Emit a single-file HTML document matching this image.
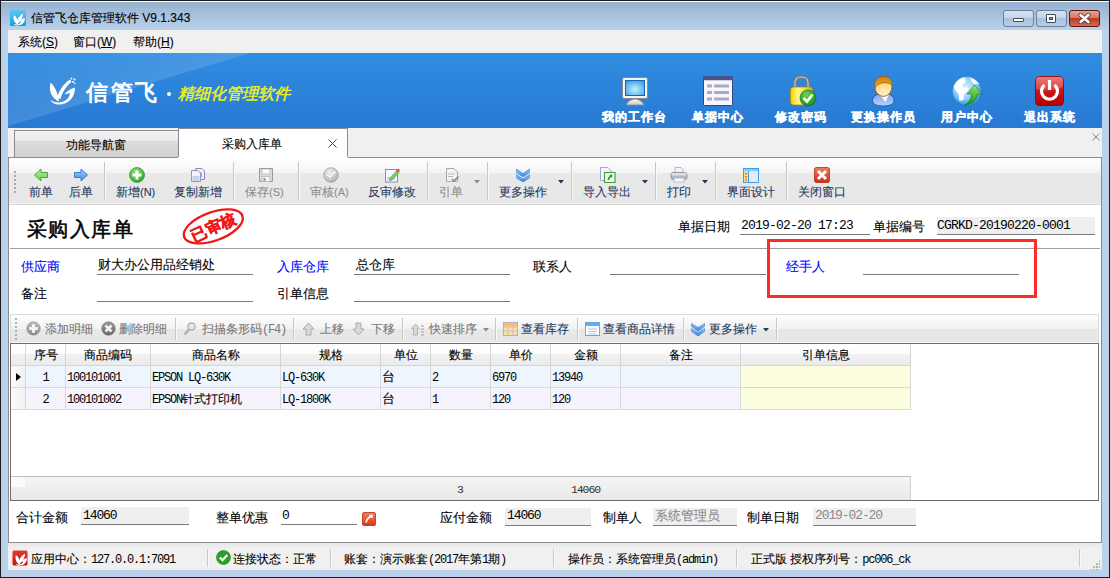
<!DOCTYPE html>
<html><head><meta charset="utf-8">
<style>
*{margin:0;padding:0;box-sizing:border-box}
html,body{-webkit-font-smoothing:antialiased;width:1110px;height:578px;overflow:hidden;position:relative;background:#b9d1ea;font-family:"Liberation Sans",sans-serif;font-size:12px;line-height:12px;color:#000}
.a{position:absolute}
.t{position:absolute;white-space:nowrap;font-size:12px;line-height:12px;-webkit-text-stroke:0.1px currentColor}
.m{font-family:"Liberation Mono",monospace}
.f13{font-size:13px;line-height:13px}
.fm{font-family:"Liberation Mono",monospace;font-size:13px;letter-spacing:-0.8px;-webkit-text-stroke:0}
.fm2{font-family:"Liberation Mono",monospace;font-size:13px;letter-spacing:-1.1px;-webkit-text-stroke:0}
.d{font-family:"Liberation Mono",monospace;font-size:12px;letter-spacing:-1.2px;-webkit-text-stroke:0}
.blue{color:#0000ff}
.ul{position:absolute;height:1px;background:#7a7a7a}
.sep{position:absolute;width:2px;background:#c8c8c8;border-right:1px solid #fafafa}
.tb{color:#1e395b}
.gr{color:#8d8d8d}
.hdr{position:absolute;top:344px;height:22px;border-right:1px solid #d5d5d5;border-bottom:1px solid #d5d5d5;background:linear-gradient(#fefefe 0,#fcfcfc 45%,#f2f2f2 50%,#ebebeb 100%)}
.cell{position:absolute;height:22px;border-right:1px solid #d8d8d8;border-bottom:1px solid #d8d8d8}
</style></head><body>

<!-- window frame -->
<div class="a" style="left:0;top:0;width:1110px;height:1px;background:#1a1a1a"></div>
<div class="a" style="left:0;top:0;width:1px;height:578px;background:#1a1a1a"></div>
<div class="a" style="left:1109px;top:0;width:1px;height:578px;background:#1a1a1a"></div>
<div class="a" style="left:0;top:577px;width:1110px;height:1px;background:#1a1a1a"></div>
<div class="a" style="left:1px;top:1px;width:1108px;height:1px;background:#fff"></div>
<div class="a" style="left:1px;top:2px;width:1108px;height:28px;background:linear-gradient(#96b1d0,#bad2ea)"></div>

<!-- title -->
<svg class="a" style="left:10px;top:10px" width="16" height="16" viewBox="0 0 16 16"><defs><linearGradient id="tic" x1="0" y1="0" x2="0" y2="1"><stop offset="0" stop-color="#62c4f0"/><stop offset="1" stop-color="#10a0e4"/></linearGradient></defs>
<rect x="0" y="0" width="16" height="16" rx="1.5" fill="url(#tic)"/>
<path d="M3.8 5 C3 10 4.5 13.5 8 14.5 C8.2 10.5 7 7 3.8 5 Z" fill="#fff"/>
<path d="M6.5 12.5 C7.5 8.5 9.5 5.5 13 3.5 C13.2 7 11.5 10 8 13.5 Z" fill="#fff"/>
<path d="M15 8.3 C15 13 11.5 15.5 7 15.5 C5.5 15.5 4.5 15 4 14 C7 15 10.5 14 11.3 11.5 L9 11.8 C10.5 9.5 13 8.5 15 8.3 Z" fill="#fff"/>
</svg>
<div class="t" style="left:31px;top:12px;color:#000">信管飞仓库管理软件 V9.1.343</div>

<!-- window buttons -->
<div class="a" style="left:1003px;top:10px;width:31px;height:17px;border:1px solid #6d7f96;border-radius:3px;background:linear-gradient(#d5e3f2 0%,#c2d5ea 45%,#a9c0dc 50%,#b7cde6 100%)"></div>
<div class="a" style="left:1013px;top:18px;width:11px;height:4px;background:#fff;border:1px solid #404c5c;border-radius:1px"></div>
<div class="a" style="left:1036px;top:10px;width:31px;height:17px;border:1px solid #6d7f96;border-radius:3px;background:linear-gradient(#d5e3f2 0%,#c2d5ea 45%,#a9c0dc 50%,#b7cde6 100%)"></div>
<div class="a" style="left:1046px;top:14px;width:10px;height:9px;background:#fff;border:1px solid #404c5c;border-radius:1px"></div>
<div class="a" style="left:1049px;top:17px;width:4px;height:3px;background:#8aa2c0;border:1px solid #404c5c"></div>
<div class="a" style="left:1069px;top:10px;width:31px;height:17px;border:1px solid #5a1a1a;border-radius:3px;background:linear-gradient(#e8a392 0%,#d47a64 45%,#bf3b20 50%,#cf6a50 100%)"></div>
<svg class="a" style="left:1078px;top:13px" width="13" height="11" viewBox="0 0 13 11"><path d="M2.5 2 L6.5 5.5 L10.5 2 M2.5 9 L6.5 5.5 L10.5 9" stroke="#4a3a3a" stroke-width="4.2" fill="none" stroke-linecap="round"/><path d="M2.5 2 L6.5 5.5 L10.5 2 M2.5 9 L6.5 5.5 L10.5 9" stroke="#fff" stroke-width="2.6" fill="none" stroke-linecap="round"/></svg>

<!-- menu bar -->
<div class="a" style="left:8px;top:30px;width:1094px;height:23px;background:#f0f0f0"></div>
<div class="t" style="left:18px;top:36px">系统(<u>S</u>)</div>
<div class="t" style="left:73px;top:36px">窗口(<u>W</u>)</div>
<div class="t" style="left:133px;top:36px">帮助(<u>H</u>)</div>

<!-- banner -->
<div class="a" style="left:8px;top:53px;width:1094px;height:75px;background:#2c83d9;overflow:hidden">
  <div class="a" style="left:0;top:0;width:1094px;height:75px;background:linear-gradient(#308de1 0,#2c84da 45%,#2879d2 100%)"></div>
  <div class="a" style="left:0;top:0;width:260px;height:75px;background:linear-gradient(163deg,rgba(255,255,255,.02) 0%,rgba(255,255,255,.10) 40%,rgba(255,255,255,.24) 72%);clip-path:polygon(0 0,242px 0,0 73px)"></div>
</div>
<svg class="a" style="left:49px;top:77px" width="27" height="29" viewBox="0 0 27 29">
<path d="M1.5 5.5 C-0.5 14 2.5 21 10 24.5 C9 17 6.5 10 1.5 5.5 Z" fill="#fff"/>
<path d="M8 21 C10 13 15 6.5 21 2.5 L22.5 5 C17.5 9 13.5 14.5 11.5 22 Z" fill="#fff"/>
<path d="M26 10.5 C26 21 19 28 9 27.5 C4.5 27 2.5 25 1.5 23 C5 25.5 9.5 26 13 25 C18 23.5 20.5 20 21 16 L15.5 17.5 C18 14 22 11.5 26 10.5 Z" fill="#fff"/>
<circle cx="22.5" cy="1.5" r="1" fill="#fff"/><circle cx="25.5" cy="2.5" r="1" fill="#fff"/><circle cx="24" cy="5" r="1" fill="#fff"/><circle cx="26" cy="6.5" r=".8" fill="#fff"/>
</svg>
<div class="t" style="left:86px;top:82px;font-size:22px;line-height:22px;color:#fff;-webkit-text-stroke:0.8px #fff;letter-spacing:2.6px">信管飞</div>
<div class="a" style="left:167px;top:92px;width:4px;height:4px;background:#fff;border-radius:2px"></div>
<div class="t" style="left:178px;top:86px;font-size:16px;line-height:16px;color:#f0f21a;font-style:italic;-webkit-text-stroke:0.45px #f0f21a">精细化管理软件</div>

<!-- banner right icons -->

<!-- monitor -->
<svg class="a" style="left:619px;top:75px" width="32" height="32" viewBox="0 0 32 32">
<defs><radialGradient id="scr" cx="0.5" cy="0.6" r="0.7"><stop offset="0" stop-color="#c8f0ff"/><stop offset="1" stop-color="#3aa0e8"/></radialGradient>
<linearGradient id="stand" x1="0" y1="0" x2="0" y2="1"><stop offset="0" stop-color="#ffffff"/><stop offset="1" stop-color="#c8c8c8"/></linearGradient></defs>
<rect x="3.5" y="2.5" width="25" height="21" rx="1.5" fill="#f4f4f4" stroke="#8a8a8a"/>
<rect x="6" y="5" width="20" height="16" fill="#1a66b0"/>
<rect x="7" y="6" width="18" height="14" fill="url(#scr)"/>
<path d="M7 30 Q9 25 16 24 Q23 25 25 30 Z" fill="url(#stand)" stroke="#8a8a8a" stroke-width=".8"/>
</svg>
<!-- list -->
<svg class="a" style="left:702px;top:75px" width="32" height="32" viewBox="0 0 32 32">
<rect x="1.5" y="1.5" width="29" height="29" rx="1.5" fill="#fff" stroke="#3b4578"/>
<rect x="1" y="1" width="30" height="4.5" fill="#48548c"/>
<rect x="2" y="5.5" width="28" height="24.5" fill="#f8f8fc"/>
<rect x="5" y="9.5" width="5" height="3" fill="#a9aac8"/><rect x="12" y="9.5" width="15" height="3" fill="#a9aac8"/>
<rect x="5" y="16" width="5" height="3" fill="#a9aac8"/><rect x="12" y="16" width="15" height="3" fill="#a9aac8"/>
<rect x="5" y="22.5" width="5" height="3" fill="#a9aac8"/><rect x="12" y="22.5" width="15" height="3" fill="#a9aac8"/>
</svg>
<!-- lock -->
<svg class="a" style="left:787px;top:75px" width="32" height="32" viewBox="0 0 32 32">
<defs><linearGradient id="lk" x1="0" y1="0" x2="1" y2="0"><stop offset="0" stop-color="#f0d000"/><stop offset=".35" stop-color="#fff88a"/><stop offset="1" stop-color="#e0b800"/></linearGradient>
<radialGradient id="gc" cx=".4" cy=".3" r=".8"><stop offset="0" stop-color="#6ad35a"/><stop offset="1" stop-color="#0a8a1a"/></radialGradient></defs>
<path d="M8 13 V8 Q8 2 14.5 2 Q21 2 21 8 V13" fill="none" stroke="#7a7a7a" stroke-width="3.2"/>
<path d="M8 13 V8 Q8 2 14.5 2 Q21 2 21 8 V13" fill="none" stroke="#c8c8c8" stroke-width="1.2"/>
<rect x="3.5" y="12" width="22" height="18" rx="3" fill="url(#lk)" stroke="#b08a00" stroke-width=".8"/>
<circle cx="21" cy="23" r="8" fill="url(#gc)" stroke="#0a6a10" stroke-width=".6"/>
<path d="M16.5 23 L20 26.5 L25.5 19.5" fill="none" stroke="#fff" stroke-width="2.6"/>
</svg>
<!-- person -->
<svg class="a" style="left:867px;top:75px" width="32" height="32" viewBox="0 0 32 32">
<defs><linearGradient id="fc" x1="0" y1="0" x2="0" y2="1"><stop offset="0" stop-color="#ffd060"/><stop offset="1" stop-color="#fff0c8"/></linearGradient>
<linearGradient id="bd" x1="0" y1="0" x2="0" y2="1"><stop offset="0" stop-color="#7aaaf0"/><stop offset="1" stop-color="#b0d4fa"/></linearGradient>
<linearGradient id="hr" x1="0" y1="0" x2="0" y2="1"><stop offset="0" stop-color="#d08010"/><stop offset="1" stop-color="#f0a820"/></linearGradient></defs>
<path d="M5.5 25.5 Q6 19.5 13 19 L20 19 Q27 19.5 27 25.5 Q27 31 16.2 31 Q5.5 31 5.5 25.5 Z" fill="url(#bd)" stroke="#3050b0" stroke-width=".9"/>
<path d="M12.5 19.5 L18.5 27 L22 19.5 Z" fill="#fff"/>
<ellipse cx="16.4" cy="11.4" rx="8.6" ry="10" fill="url(#fc)" stroke="#a05800" stroke-width=".9"/>
<path d="M7.9 13 C7 5 10.5 1.4 16.4 1.4 C22.5 1.4 25.3 5 25 10.5 C22 7.5 17.5 7 13.5 8.5 C11 9.5 9 11 7.9 13 Z" fill="url(#hr)" stroke="#a05800" stroke-width=".7"/>
</svg>
<!-- globe -->
<svg class="a" style="left:951px;top:75px" width="32" height="32" viewBox="0 0 32 32">
<defs><radialGradient id="gl" cx=".45" cy=".4" r=".65"><stop offset="0" stop-color="#d8f2ff"/><stop offset=".6" stop-color="#8ccaf8"/><stop offset="1" stop-color="#2088e0"/></radialGradient>
<linearGradient id="ar" x1="0" y1="0" x2="0" y2="1"><stop offset="0" stop-color="#90e868"/><stop offset="1" stop-color="#10901c"/></linearGradient></defs>
<circle cx="15.8" cy="16" r="14.2" fill="url(#gl)"/>
<path d="M3 11 Q6 4 13 2.5 Q16 5 14 8 Q11 9 12 12 Q15 13 17 12 Q19 15 15 17 Q12 19 13 24 Q10 27 8 25 Q9 20 6 17 Q3 15 3 11 Z" fill="#fff"/>
<path d="M19 2.5 Q25 4 28 9 Q25 10 22 8 Q20 6 19 2.5 Z" fill="#fff" opacity=".9"/>
<path d="M13 30.5 Q20 27 20.5 19 L16 19 L23.5 10 L31 19 L26.5 19 Q26 28 13 30.5 Z" fill="url(#ar)" stroke="#0a7a16" stroke-width=".6"/>
</svg>
<!-- power -->
<svg class="a" style="left:1034px;top:75px" width="32" height="32" viewBox="0 0 32 32">
<defs><linearGradient id="pw" x1="0" y1="0" x2="0" y2="1"><stop offset="0" stop-color="#e86060"/><stop offset=".45" stop-color="#d01818"/><stop offset="1" stop-color="#b00000"/></linearGradient></defs>
<rect x="1.5" y="1.5" width="28" height="29" rx="4" fill="url(#pw)" stroke="#8a0000" stroke-width=".8"/>
<path d="M2 3 Q2 2 4 2 L28 2 Q29 2 29 4 L29 12 Q16 18 2 14 Z" fill="#fff" opacity=".18"/>
<path d="M10.5 10 A8 8 0 1 0 20.5 10" fill="none" stroke="#fff" stroke-width="3.2"/>
<path d="M15.5 5 V15" stroke="#fff" stroke-width="3.2"/>
</svg>

<div class="t" style="left:602px;top:111px;color:#fff;font-weight:bold;letter-spacing:1px;-webkit-text-stroke:0.35px #fff">我的工作台</div>
<div class="t" style="left:692px;top:111px;color:#fff;font-weight:bold;letter-spacing:1px;-webkit-text-stroke:0.35px #fff">单据中心</div>
<div class="t" style="left:775px;top:111px;color:#fff;font-weight:bold;letter-spacing:1px;-webkit-text-stroke:0.35px #fff">修改密码</div>
<div class="t" style="left:851px;top:111px;color:#fff;font-weight:bold;letter-spacing:1px;-webkit-text-stroke:0.35px #fff">更换操作员</div>
<div class="t" style="left:941px;top:111px;color:#fff;font-weight:bold;letter-spacing:1px;-webkit-text-stroke:0.35px #fff">用户中心</div>
<div class="t" style="left:1024px;top:111px;color:#fff;font-weight:bold;letter-spacing:1px;-webkit-text-stroke:0.35px #fff">退出系统</div>

<!-- tab strip -->
<div class="a" style="left:8px;top:128px;width:1094px;height:30px;background:#f0f0f0"></div>
<div class="a" style="left:14px;top:130px;width:165px;height:28px;border:1px solid #898c95;border-bottom:none;background:linear-gradient(#f2f2f2 0,#ebebeb 35%,#dddddd 36%,#cfcfcf 100%)"></div>
<div class="t" style="left:66px;top:139px">功能导航窗</div>
<div class="a" style="left:178px;top:128px;width:170px;height:30px;border:1px solid #898c95;border-bottom:none;background:#fff"></div>
<div class="t" style="left:222px;top:138px">采购入库单</div>
<svg class="a" style="left:328px;top:139px" width="9" height="9" viewBox="0 0 9 9"><path d="M0.5 0.5 L8.5 8.5 M8.5 0.5 L0.5 8.5" stroke="#444" stroke-width="1"/></svg>
<svg class="a" style="left:1092px;top:133px" width="8" height="8" viewBox="0 0 8 8"><path d="M0.5 0.5 L7.5 7.5 M7.5 0.5 L0.5 7.5" stroke="#8a8a8a" stroke-width="1"/></svg>

<!-- main panel -->
<div class="a" style="left:8px;top:157px;width:1094px;height:386px;background:#fff;border:1px solid #8c8c8c;border-top-color:#898c95"></div>
<div class="a" style="left:178px;top:157px;width:170px;height:1px;background:#fff"></div>

<!-- toolbar -->
<div class="a" style="left:9px;top:158px;width:1092px;height:47px;background:linear-gradient(#fefefe 0px,#f9f9f9 8px,#f3f3f3 15px,#e9e9e9 15px,#e7e7e7 45px,#f2f2f2 45px,#f2f2f2 46px,#d6d6d6 46px)"></div>


<!-- toolbar grip -->
<div class="a" style="left:14px;top:171px;width:2px;height:23px;background:repeating-linear-gradient(#a8a8a8 0,#a8a8a8 2px,transparent 2px,transparent 4px)"></div>
<!-- separators -->
<div class="sep" style="left:104px;top:162px;height:38px"></div>
<div class="sep" style="left:233px;top:162px;height:38px"></div>
<div class="sep" style="left:298px;top:162px;height:38px"></div>
<div class="sep" style="left:427px;top:162px;height:38px"></div>
<div class="sep" style="left:487px;top:162px;height:38px"></div>
<div class="sep" style="left:571px;top:162px;height:38px"></div>
<div class="sep" style="left:655px;top:162px;height:38px"></div>
<div class="sep" style="left:715px;top:162px;height:38px"></div>
<div class="sep" style="left:786px;top:162px;height:38px"></div>
<!-- texts -->
<div class="t tb" style="left:29px;top:186px">前单</div>
<div class="t tb" style="left:69px;top:186px">后单</div>
<div class="t tb" style="left:116px;top:186px">新增<span style="font-size:11px">(N)</span></div>
<div class="t tb" style="left:174px;top:186px">复制新增</div>
<div class="t gr" style="left:245px;top:186px">保存<span style="font-size:11px">(S)</span></div>
<div class="t gr" style="left:310px;top:186px">审核<span style="font-size:11px">(A)</span></div>
<div class="t tb" style="left:368px;top:186px">反审修改</div>
<div class="t gr" style="left:439px;top:186px">引单</div>
<div class="t tb" style="left:499px;top:186px">更多操作</div>
<div class="t tb" style="left:583px;top:186px">导入导出</div>
<div class="t tb" style="left:667px;top:186px">打印</div>
<div class="t tb" style="left:727px;top:186px">界面设计</div>
<div class="t tb" style="left:798px;top:186px">关闭窗口</div>
<!-- dropdown arrows -->
<svg class="a" style="left:474px;top:180px" width="6" height="4"><path d="M0 0 H6 L3 3.5 Z" fill="#8a8a8a"/></svg>
<svg class="a" style="left:558px;top:180px" width="6" height="4"><path d="M0 0 H6 L3 3.5 Z" fill="#1e395b"/></svg>
<svg class="a" style="left:642px;top:180px" width="6" height="4"><path d="M0 0 H6 L3 3.5 Z" fill="#1e395b"/></svg>
<svg class="a" style="left:702px;top:180px" width="6" height="4"><path d="M0 0 H6 L3 3.5 Z" fill="#1e395b"/></svg>
<!-- icons -->
<svg class="a" style="left:33px;top:167px" width="16" height="16" viewBox="0 0 16 16"><defs><linearGradient id="ga" x1="0" y1="0" x2="0" y2="1"><stop offset="0" stop-color="#b8f0a0"/><stop offset="1" stop-color="#6cc84a"/></linearGradient></defs><path d="M1.5 8 L8 2 V5.5 H14.5 V10.5 H8 V14 Z" fill="url(#ga)" stroke="#4aa83a" stroke-width="1"/></svg>
<svg class="a" style="left:73px;top:167px" width="16" height="16" viewBox="0 0 16 16"><defs><linearGradient id="ba" x1="0" y1="0" x2="0" y2="1"><stop offset="0" stop-color="#a8d4fa"/><stop offset="1" stop-color="#3c8ce0"/></linearGradient></defs><path d="M14.5 8 L8 2 V5.5 H1.5 V10.5 H8 V14 Z" fill="url(#ba)" stroke="#3a7ed0" stroke-width="1"/></svg>
<svg class="a" style="left:129px;top:167px" width="16" height="16" viewBox="0 0 16 16"><defs><radialGradient id="gp" cx=".4" cy=".3" r=".8"><stop offset="0" stop-color="#8ee070"/><stop offset="1" stop-color="#2a9a2a"/></radialGradient></defs><circle cx="8" cy="8" r="7.5" fill="url(#gp)" stroke="#3a9a3a" stroke-width=".8"/><path d="M8 3.5 V12.5 M3.5 8 H12.5" stroke="#fff" stroke-width="3"/></svg>
<svg class="a" style="left:190px;top:167px" width="16" height="16" viewBox="0 0 16 16"><path d="M5.5 1.5 H12 L14.5 4 V12.5 H5.5 Z" fill="#f4f0fa" stroke="#9a7ec8"/><path d="M11.5 5 V10" stroke="#b8a0e0"/><path d="M1.5 3.5 H8 L10.5 6 V14.5 H1.5 Z" fill="#f0f4fa" stroke="#8a9ab8"/><rect x="2.5" y="9" width="7" height="5" fill="#c8d4ec"/></svg>
<svg class="a" style="left:258px;top:167px" width="16" height="16" viewBox="0 0 16 16"><path d="M1.5 1.5 H14.5 V14.5 H1.5 Z" fill="#dcdcdc" stroke="#9a9a9a"/><rect x="4" y="2" width="8" height="5" fill="#fafafa" stroke="#aaa" stroke-width=".6"/><rect x="4" y="9.5" width="8" height="5" fill="#f4f4f4" stroke="#aaa" stroke-width=".6"/><rect x="5.5" y="11" width="2" height="3" fill="#999"/></svg>
<svg class="a" style="left:323px;top:167px" width="16" height="16" viewBox="0 0 16 16"><defs><radialGradient id="gy" cx=".4" cy=".3" r=".8"><stop offset="0" stop-color="#f0f0f0"/><stop offset="1" stop-color="#a8a8a8"/></radialGradient></defs><circle cx="8" cy="8" r="7.3" fill="url(#gy)" stroke="#a0a0a0" stroke-width=".8"/><path d="M4 8 L7 11 L12.5 5" fill="none" stroke="#fff" stroke-width="2.4"/><path d="M4 8.8 L7 11.8 L12.5 5.8" fill="none" stroke="#9a9a9a" stroke-width=".8"/></svg>
<svg class="a" style="left:384px;top:167px" width="16" height="16" viewBox="0 0 16 16"><rect x="1.5" y="2.5" width="12" height="12.5" fill="#f4f8ff" stroke="#7a8ec8"/><rect x="3" y="10" width="8" height="3" fill="#c8d4f0"/><path d="M6 11 L13 3.5 L15 5.5 L8 13 L5.5 13.5 Z" fill="#7ad05a" stroke="#3a9a2a" stroke-width=".6"/><circle cx="14" cy="3.5" r="1.8" fill="#f05050"/></svg>
<svg class="a" style="left:444px;top:167px" width="16" height="16" viewBox="0 0 16 16"><path d="M2.5 1.5 H10 L13.5 5 V14.5 H2.5 Z" fill="#f2f2f2" stroke="#a8a8a8"/><path d="M4 7 H11 M4 9.5 H9" stroke="#b8b8b8"/><path d="M8 12 L10 14 L14.5 9.5" fill="none" stroke="#8a8a8a" stroke-width="1.6"/></svg>
<svg class="a" style="left:515px;top:167px" width="16" height="16" viewBox="0 0 16 16"><defs><linearGradient id="cv" x1="0" y1="0" x2="0" y2="1"><stop offset="0" stop-color="#9cd0fa"/><stop offset="1" stop-color="#2f7ee0"/></linearGradient></defs><path d="M1.5 2 L8 6.5 L14.5 2 V5.5 L8 10 L1.5 5.5 Z" fill="url(#cv)" stroke="#3a7ed0" stroke-width=".6"/><path d="M1.5 7.5 L8 12 L14.5 7.5 V11 L8 15 L1.5 11 Z" fill="url(#cv)" stroke="#3a7ed0" stroke-width=".6"/></svg>
<svg class="a" style="left:599px;top:167px" width="17" height="16" viewBox="0 0 17 16"><path d="M1.5 .5 H9 L12 3.5 V13.5 H1.5 Z" fill="#f4f6ff" stroke="#a0a8d8"/><rect x="5.5" y="5.5" width="10.5" height="10" fill="#f4fff4" stroke="#3aa83a" stroke-width="1.2"/><path d="M8.5 13 Q9 9.5 11 9 L10 8 L13.5 7.5 L13 11 L12 10 Q10.5 10.5 10.5 13 Z" fill="#2a9a2a"/></svg>
<svg class="a" style="left:670px;top:167px" width="18" height="16" viewBox="0 0 18 16"><path d="M5 .5 H11 L13 2.5 V6 H5 Z" fill="#eef4ff" stroke="#8aaad8" stroke-width=".8"/><rect x="1" y="5.5" width="16" height="7" rx="2" fill="#b8b8b8" stroke="#8a8a8a" stroke-width=".8"/><rect x="1.5" y="6" width="15" height="2.5" rx="1" fill="#e0e0e0"/><rect x="4" y="11" width="10" height="4" fill="#f8f8f8" stroke="#a0b8e0" stroke-width=".8"/></svg>
<svg class="a" style="left:743px;top:168px" width="16" height="15" viewBox="0 0 16 15"><rect x=".5" y=".5" width="15" height="14" fill="#e8e8fa" stroke="#3aa0f0"/><rect x="1" y="1" width="14" height="2" fill="#8ac8f8"/><rect x="1" y="3" width="4.5" height="11" fill="#f8e080"/><path d="M5.5 3 V14" stroke="#3aa0f0"/><rect x="2.2" y="5" width="1.6" height="1.6" fill="#e07020"/><rect x="2.2" y="8" width="1.6" height="1.6" fill="#e07020"/><rect x="2.2" y="11" width="1.6" height="1.6" fill="#e07020"/></svg>
<svg class="a" style="left:814px;top:167px" width="16" height="16" viewBox="0 0 16 16"><defs><linearGradient id="rx" x1="0" y1="0" x2="0" y2="1"><stop offset="0" stop-color="#f07a60"/><stop offset="1" stop-color="#c8301a"/></linearGradient></defs><rect x=".5" y=".5" width="15" height="15" rx="2" fill="url(#rx)" stroke="#b02810" stroke-width=".8"/><path d="M4 4 L12 12 M12 4 L4 12" stroke="#fff" stroke-width="3"/></svg>

<!-- form header -->
<div class="t" style="left:27px;top:219px;font-size:20px;line-height:20px;-webkit-text-stroke:0.55px #000;letter-spacing:1.4px">采购入库单</div>
<div class="t f13" style="left:678px;top:220px">单据日期</div>
<div class="t fm" style="left:741px;top:220px">2019-02-20 17:23</div>
<div class="ul" style="left:740px;top:234px;width:130px"></div>
<div class="t f13" style="left:873px;top:220px">单据编号</div>
<div class="a" style="left:937px;top:217px;width:158px;height:18px;background:#efefef;border-bottom:1px solid #7a7a7a"></div>
<div class="t fm" style="left:937px;top:220px">CGRKD-20190220-0001</div>
<div class="a" style="left:10px;top:248px;width:1090px;height:1px;background:#a0a0a0"></div>

<!-- stamp -->
<svg class="a" style="left:178px;top:204px" width="72" height="46" viewBox="0 0 72 46">
<ellipse cx="35.3" cy="22.4" rx="31" ry="14.2" transform="rotate(-20 35.3 22.4)" fill="none" stroke="#f01818" stroke-width="2.3"/>
<text x="35.5" y="28.5" transform="rotate(-25 35.5 23)" text-anchor="middle" font-family="Liberation Sans" font-weight="bold" font-size="15.5" fill="#f01818" stroke="#f01818" stroke-width="0.5">已审核</text>
</svg>

<!-- fields -->
<div class="t f13 blue" style="left:21px;top:260px">供应商</div>
<div class="t f13" style="left:98px;top:258px">财大办公用品经销处</div>
<div class="ul" style="left:97px;top:274px;width:156px"></div>
<div class="t f13 blue" style="left:277px;top:260px">入库仓库</div>
<div class="t f13" style="left:356px;top:258px">总仓库</div>
<div class="ul" style="left:354px;top:274px;width:156px"></div>
<div class="t f13" style="left:533px;top:260px">联系人</div>
<div class="ul" style="left:610px;top:274px;width:156px"></div>
<div class="t f13 blue" style="left:786px;top:260px">经手人</div>
<div class="ul" style="left:863px;top:274px;width:156px"></div>
<div class="t f13" style="left:21px;top:287px">备注</div>
<div class="ul" style="left:97px;top:301px;width:156px"></div>
<div class="t f13" style="left:277px;top:287px">引单信息</div>
<div class="ul" style="left:354px;top:301px;width:156px"></div>

<!-- red rect -->
<div class="a" style="left:767px;top:239px;width:270px;height:59px;border:3px solid #fd2b2b"></div>

<!-- detail toolbar -->
<div class="a" style="left:10px;top:314px;width:1089px;height:29px;border:1px solid #d5dee9;border-bottom:none;background:linear-gradient(#fefefe 0px,#f8f8f8 6px,#f2f2f2 14px,#e8e8e8 14px,#e6e6e6 27px,#f6f6f6 27px)"></div>


<!-- detail toolbar items -->
<div class="a" style="left:15px;top:318px;width:2px;height:23px;background:repeating-linear-gradient(#b0b0b0 0,#b0b0b0 2px,transparent 2px,transparent 4px)"></div>
<div class="sep" style="left:175px;top:318px;height:22px"></div>
<div class="sep" style="left:293px;top:318px;height:22px"></div>
<div class="sep" style="left:402px;top:318px;height:22px"></div>
<div class="sep" style="left:495px;top:318px;height:22px"></div>
<div class="sep" style="left:577px;top:318px;height:22px"></div>
<div class="sep" style="left:683px;top:318px;height:22px"></div>
<div class="sep" style="left:776px;top:318px;height:22px"></div>
<svg class="a" style="left:26px;top:321px" width="15" height="15" viewBox="0 0 15 15"><defs><linearGradient id="g1" x1="0" y1="0" x2="0" y2="1"><stop offset="0" stop-color="#bcbcbc"/><stop offset="1" stop-color="#8a8a8a"/></linearGradient><linearGradient id="g2" x1="0" y1="0" x2="0" y2="1"><stop offset="0" stop-color="#9a9a9a"/><stop offset="1" stop-color="#666"/></linearGradient></defs><circle cx="7.5" cy="7.5" r="6.8" fill="url(#g1)" stroke="#9a9a9a" stroke-width=".6"/><path d="M7.5 3.2 V11.8 M3.2 7.5 H11.8" stroke="#f4f4f4" stroke-width="3"/></svg>
<div class="t" style="left:45px;top:323px;color:#777">添加明细</div>
<svg class="a" style="left:101px;top:321px" width="15" height="15" viewBox="0 0 15 15"><circle cx="7.5" cy="7.5" r="6.8" fill="url(#g2)" stroke="#777" stroke-width=".6"/><path d="M4.5 4.5 L10.5 10.5 M10.5 4.5 L4.5 10.5" stroke="#f4f4f4" stroke-width="2.6"/></svg>
<div class="t" style="left:119px;top:323px;color:#777">删除明细</div>
<svg class="a" style="left:183px;top:322px" width="13" height="14" viewBox="0 0 13 14"><circle cx="8.5" cy="4.5" r="3.6" fill="#e8e8e8" stroke="#a8a8a8" stroke-width="1.2"/><path d="M6.5 7 L1.5 12.5" stroke="#a8a8a8" stroke-width="2"/></svg>
<div class="t" style="left:202px;top:323px;color:#777">扫描条形码<span class="d">(F4)</span></div>
<svg class="a" style="left:302px;top:322px" width="13" height="14" viewBox="0 0 13 14"><path d="M6.5 1 L12 7 H9 V13 H4 V7 H1 Z" fill="#d8d8d8" stroke="#a0a0a0" stroke-width=".8"/></svg>
<div class="t" style="left:320px;top:323px;color:#777">上移</div>
<svg class="a" style="left:352px;top:322px" width="13" height="14" viewBox="0 0 13 14"><path d="M6.5 13 L12 7 H9 V1 H4 V7 H1 Z" fill="#d8d8d8" stroke="#a0a0a0" stroke-width=".8"/></svg>
<div class="t" style="left:371px;top:323px;color:#777">下移</div>
<svg class="a" style="left:411px;top:322px" width="14" height="14" viewBox="0 0 14 14"><path d="M4.5 2 L8.5 6.5 H6.5 V13 H2.5 V6.5 H.5 Z" fill="#d8d8d8" stroke="#a8a8a8" stroke-width=".8"/><path d="M10 4 H13 M10 7 H13 M10 10 H13 M10 13 H13" stroke="#a0a0a0" stroke-width="1.2"/></svg>
<div class="t" style="left:429px;top:323px;color:#777">快速排序</div>
<svg class="a" style="left:483px;top:328px" width="6" height="4"><path d="M0 0 H6 L3 3.5 Z" fill="#8a8a8a"/></svg>
<svg class="a" style="left:503px;top:322px" width="15" height="14" viewBox="0 0 15 14"><rect x=".5" y=".5" width="14" height="13" fill="#fbe0a0" stroke="#b8a8d8"/><path d="M5 .5 V13.5 M10 .5 V13.5 M.5 5 H14.5 M.5 9 H14.5" stroke="#c8b8e0"/><rect x="1" y="1" width="13" height="3.5" fill="#f8c060"/></svg>
<div class="t tb" style="left:521px;top:323px">查看库存</div>
<svg class="a" style="left:585px;top:322px" width="15" height="14" viewBox="0 0 15 14"><rect x=".5" y=".5" width="14" height="13" fill="#fff" stroke="#6aa8e0"/><rect x="1" y="1" width="13" height="3" fill="#5ab0f0"/><path d="M3 7 H12 M3 9.5 H12 M3 12 H12" stroke="#a8c8e8"/></svg>
<div class="t tb" style="left:603px;top:323px">查看商品详情</div>
<svg class="a" style="left:690px;top:322px" width="16" height="15" viewBox="0 0 16 15"><path d="M1.5 1.5 L8 5.5 L14.5 1.5 V4.5 L8 9 L1.5 4.5 Z" fill="url(#cv)" stroke="#3a7ed0" stroke-width=".6"/><path d="M1.5 6.5 L8 10.5 L14.5 6.5 V9.5 L8 14 L1.5 9.5 Z" fill="url(#cv)" stroke="#3a7ed0" stroke-width=".6"/></svg>
<div class="t tb" style="left:709px;top:323px">更多操作</div>
<svg class="a" style="left:763px;top:328px" width="6" height="4"><path d="M0 0 H6 L3 3.5 Z" fill="#1e395b"/></svg>

<!-- grid -->
<div class="a" style="left:10px;top:343px;width:1089px;height:158px;border:1px solid #6f6f6f;background:#fff"></div>

<!-- grid content -->
<div class="hdr" style="left:11px;width:15px"></div>
<div class="hdr" style="left:26px;width:40px"></div>
<div class="t" style="left:26px;top:349px;width:39px;text-align:center">序号</div>
<div class="hdr" style="left:66px;width:85px"></div>
<div class="t" style="left:66px;top:349px;width:84px;text-align:center">商品编码</div>
<div class="hdr" style="left:151px;width:130px"></div>
<div class="t" style="left:151px;top:349px;width:129px;text-align:center">商品名称</div>
<div class="hdr" style="left:281px;width:100px"></div>
<div class="t" style="left:281px;top:349px;width:99px;text-align:center">规格</div>
<div class="hdr" style="left:381px;width:50px"></div>
<div class="t" style="left:381px;top:349px;width:49px;text-align:center">单位</div>
<div class="hdr" style="left:431px;width:60px"></div>
<div class="t" style="left:431px;top:349px;width:59px;text-align:center">数量</div>
<div class="hdr" style="left:491px;width:60px"></div>
<div class="t" style="left:491px;top:349px;width:59px;text-align:center">单价</div>
<div class="hdr" style="left:551px;width:70px"></div>
<div class="t" style="left:551px;top:349px;width:69px;text-align:center">金额</div>
<div class="hdr" style="left:621px;width:120px"></div>
<div class="t" style="left:621px;top:349px;width:119px;text-align:center">备注</div>
<div class="hdr" style="left:741px;width:170px"></div>
<div class="t" style="left:741px;top:349px;width:169px;text-align:center">引单信息</div>
<div class="cell" style="left:11px;top:366px;width:15px;background:linear-gradient(90deg,#fbfbfb,#f0f0f0)"></div>
<div class="cell" style="left:26px;top:366px;width:40px;background:#eef5fd"></div>
<div class="cell" style="left:66px;top:366px;width:85px;background:#eef5fd"></div>
<div class="cell" style="left:151px;top:366px;width:130px;background:#eef5fd"></div>
<div class="cell" style="left:281px;top:366px;width:100px;background:#eef5fd"></div>
<div class="cell" style="left:381px;top:366px;width:50px;background:#eef5fd"></div>
<div class="cell" style="left:431px;top:366px;width:60px;background:#eef5fd"></div>
<div class="cell" style="left:491px;top:366px;width:60px;background:#eef5fd"></div>
<div class="cell" style="left:551px;top:366px;width:70px;background:#eef5fd"></div>
<div class="cell" style="left:621px;top:366px;width:120px;background:#eef5fd"></div>
<div class="cell" style="left:741px;top:366px;width:170px;background:#fdfde0"></div>
<div class="t d" style="left:26px;top:372px;width:39px;text-align:center">1</div>
<div class="t" style="left:67px;top:371px"><span class="d">100101001</span></div>
<div class="t" style="left:152px;top:371px"><span class="d">EPSON LQ-630K</span></div>
<div class="t" style="left:282px;top:371px"><span class="d">LQ-630K</span></div>
<div class="t" style="left:382px;top:370px;font-size:13px;line-height:13px">台</div>
<div class="t" style="left:432px;top:371px"><span class="d">2</span></div>
<div class="t" style="left:492px;top:371px"><span class="d">6970</span></div>
<div class="t" style="left:552px;top:371px"><span class="d">13940</span></div>
<div class="cell" style="left:11px;top:388px;width:15px;background:linear-gradient(90deg,#fbfbfb,#f0f0f0)"></div>
<div class="cell" style="left:26px;top:388px;width:40px;background:#f5f3fb"></div>
<div class="cell" style="left:66px;top:388px;width:85px;background:#f5f3fb"></div>
<div class="cell" style="left:151px;top:388px;width:130px;background:#f5f3fb"></div>
<div class="cell" style="left:281px;top:388px;width:100px;background:#f5f3fb"></div>
<div class="cell" style="left:381px;top:388px;width:50px;background:#f5f3fb"></div>
<div class="cell" style="left:431px;top:388px;width:60px;background:#f5f3fb"></div>
<div class="cell" style="left:491px;top:388px;width:60px;background:#f5f3fb"></div>
<div class="cell" style="left:551px;top:388px;width:70px;background:#f5f3fb"></div>
<div class="cell" style="left:621px;top:388px;width:120px;background:#f5f3fb"></div>
<div class="cell" style="left:741px;top:388px;width:170px;background:#fdfde0"></div>
<div class="t d" style="left:26px;top:394px;width:39px;text-align:center">2</div>
<div class="t" style="left:67px;top:393px"><span class="d">100101002</span></div>
<div class="t" style="left:152px;top:393px"><span class="d">EPSON</span><span style="font-size:12px">针式打印机</span></div>
<div class="t" style="left:282px;top:393px"><span class="d">LQ-1800K</span></div>
<div class="t" style="left:382px;top:392px;font-size:13px;line-height:13px">台</div>
<div class="t" style="left:432px;top:393px"><span class="d">1</span></div>
<div class="t" style="left:492px;top:393px"><span class="d">120</span></div>
<div class="t" style="left:552px;top:393px"><span class="d">120</span></div>
<div class="a" style="left:16px;top:373px;width:0;height:0;border-left:5px solid #000;border-top:4px solid transparent;border-bottom:4px solid transparent"></div>
<div class="a" style="left:11px;top:476px;width:900px;height:24px;border-top:1px solid #bcbcbc;border-right:1px solid #d0d0d0;background:linear-gradient(#f4f4f4,#e9e9e9)"></div>
<div class="a" style="left:11px;top:477px;width:14px;height:10px;background:#fafafa"></div>
<div class="t d" style="left:457px;top:484px;font-size:11.5px;letter-spacing:-1.1px;color:#333">3</div>
<div class="t d" style="left:571px;top:484px;font-size:11.5px;letter-spacing:-1.1px;color:#333">14060</div>

<!-- totals -->
<div class="t f13" style="left:16px;top:511px">合计金额</div>
<div class="a" style="left:81px;top:507px;width:108px;height:18px;background:#efefef;border-bottom:1px solid #7a7a7a"></div>
<div class="t fm2" style="left:83px;top:510px">14060</div>
<div class="t f13" style="left:216px;top:511px">整单优惠</div>
<div class="t fm2" style="left:282px;top:510px">0</div>
<div class="ul" style="left:281px;top:524px;width:76px"></div>
<svg class="a" style="left:362px;top:512px" width="14" height="14" viewBox="0 0 14 14"><defs><linearGradient id="ri" x1="0" y1="0" x2="0" y2="1"><stop offset="0" stop-color="#f88060"/><stop offset="1" stop-color="#d83418"/></linearGradient></defs><rect x=".5" y=".5" width="13" height="13" rx="1.5" fill="url(#ri)" stroke="#b82a10" stroke-width=".8"/><path d="M4 10.5 Q5 6 9.5 4 M7.5 3.5 L10 3.5 L10 6" fill="none" stroke="#fff" stroke-width="1.6"/></svg>
<div class="t f13" style="left:440px;top:511px">应付金额</div>
<div class="a" style="left:505px;top:508px;width:86px;height:18px;background:#efefef;border-bottom:1px solid #7a7a7a"></div>
<div class="t fm2" style="left:507px;top:510px">14060</div>
<div class="t f13" style="left:603px;top:511px">制单人</div>
<div class="a" style="left:653px;top:508px;width:84px;height:18px;background:#efefef;border-bottom:1px solid #7a7a7a"></div>
<div class="t f13" style="left:655px;top:509px;color:#8a8a8a">系统管理员</div>
<div class="t f13" style="left:747px;top:511px">制单日期</div>
<div class="a" style="left:813px;top:508px;width:103px;height:18px;background:#efefef;border-bottom:1px solid #7a7a7a"></div>
<div class="t fm2" style="left:815px;top:510px;color:#8a8a8a">2019-02-20</div>

<!-- status bar -->
<div class="a" style="left:8px;top:543px;width:1094px;height:27px;background:linear-gradient(#e6e6e6 0,#f0f0f0 5px,#f0f0f0 100%)"></div>
<div class="t" style="left:31px;top:553px">应用中心：<span class="d">127.0.0.1:7091</span></div>
<div class="sep" style="left:207px;top:549px;height:18px"></div>
<div class="t" style="left:233px;top:553px">连接状态：正常</div>
<div class="sep" style="left:330px;top:549px;height:18px"></div>
<div class="t" style="left:344px;top:553px">账套：演示账套<span class="d">(2017</span>年第<span class="d">1</span>期<span class="d">)</span></div>
<div class="sep" style="left:553px;top:549px;height:18px"></div>
<div class="t" style="left:568px;top:553px">操作员：系统管理员<span class="d">(admin)</span></div>
<div class="sep" style="left:736px;top:549px;height:18px"></div>
<div class="t" style="left:751px;top:553px">正式版 授权序列号：<span class="d">pc006_ck</span></div>
<div class="sep" style="left:1079px;top:549px;height:18px"></div>


<svg class="a" style="left:12px;top:550px" width="16" height="16" viewBox="0 0 16 16"><defs><linearGradient id="sic" x1="0" y1="0" x2="0" y2="1"><stop offset="0" stop-color="#e03a30"/><stop offset="1" stop-color="#cc1010"/></linearGradient></defs>
<rect x="0.5" y="0.5" width="15" height="15" rx="1.5" fill="url(#sic)"/>
<path d="M3.8 5 C3 10 4.5 13.5 8 14.5 C8.2 10.5 7 7 3.8 5 Z" fill="#fff"/>
<path d="M6.5 12.5 C7.5 8.5 9.5 5.5 13 3.5 C13.2 7 11.5 10 8 13.5 Z" fill="#fff"/>
<path d="M15 8.3 C15 13 11.5 15.5 7 15.5 C5.5 15.5 4.5 15 4 14 C7 15 10.5 14 11.3 11.5 L9 11.8 C10.5 9.5 13 8.5 15 8.3 Z" fill="#fff"/>
</svg>
<svg class="a" style="left:216px;top:550px" width="15" height="15" viewBox="0 0 15 15"><circle cx="7.5" cy="7.5" r="7" fill="#2aa02a" stroke="#1a801a" stroke-width=".6"/><path d="M3.8 7.5 L6.5 10.2 L11.3 5" fill="none" stroke="#fff" stroke-width="2.2"/></svg>
<div class="a" style="left:1090px;top:560px;width:10px;height:10px;background:radial-gradient(circle at 1px 1px,#b0b0b0 1px,transparent 1.2px) 0 0/3px 3px;clip-path:polygon(100% 0,100% 100%,0 100%)"></div>

</body></html>
